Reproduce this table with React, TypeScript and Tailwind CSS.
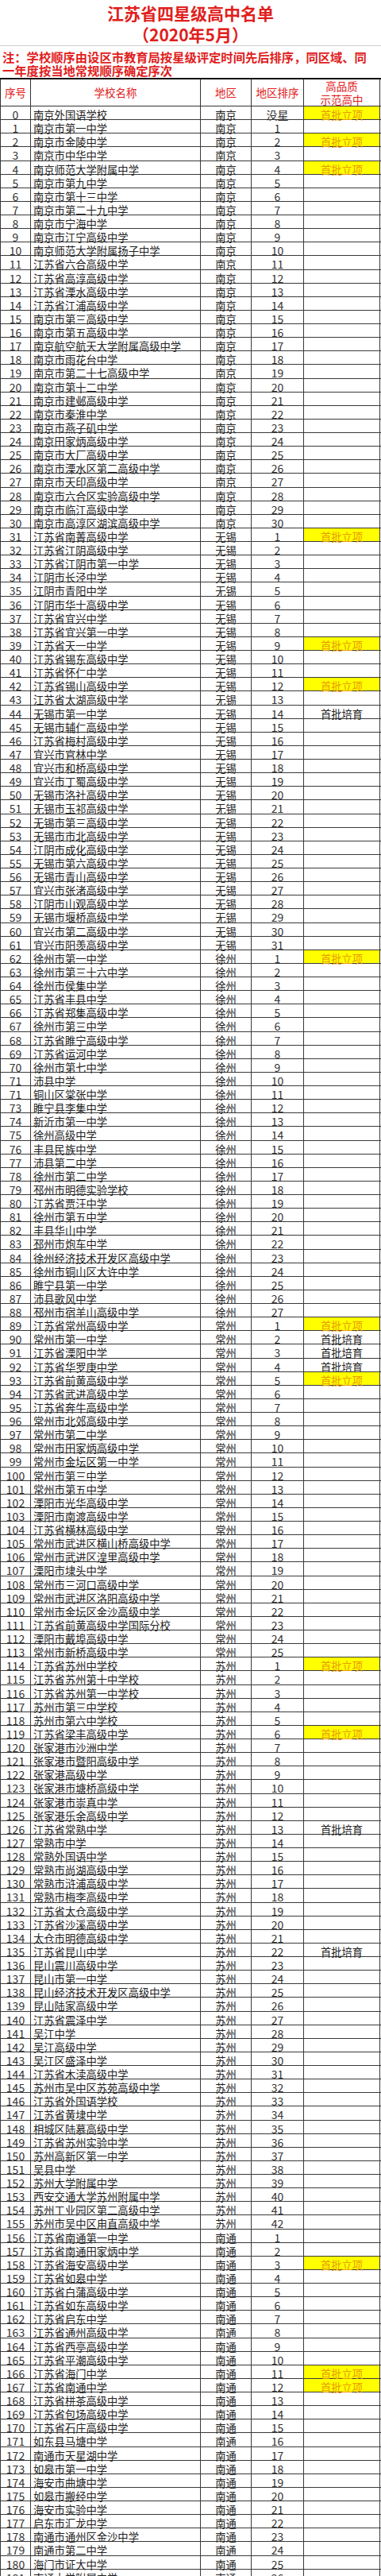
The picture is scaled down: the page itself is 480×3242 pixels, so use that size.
const groups: [string, string[]][] = [
  [
    "南京",
    [
      "南京外国语学校", "南京市第一中学", "南京市金陵中学", "南京市中华中学", "南京师范大学附属中学",
      "南京市第九中学", "南京市第十三中学", "南京市第二十九中学", "南京市宁海中学", "南京市江宁高级中学",
      "南京师范大学附属扬子中学", "江苏省六合高级中学", "江苏省高淳高级中学", "江苏省溧水高级中学", "江苏省江浦高级中学",
      "南京市第三高级中学", "南京市第五高级中学", "南京航空航天大学附属高级中学", "南京市雨花台中学", "南京市第二十七高级中学",
      "南京市第十二中学", "南京市建邺高级中学", "南京市秦淮中学", "南京市燕子矶中学", "南京田家炳高级中学",
      "南京市大厂高级中学", "南京市溧水区第二高级中学", "南京市天印高级中学", "南京市六合区实验高级中学", "南京市临江高级中学",
      "南京市高淳区湖滨高级中学",
    ],
  ],
  [
    "无锡",
    [
      "江苏省南菁高级中学", "江苏省江阴高级中学", "江苏省江阴市第一中学", "江阴市长泾中学", "江阴市青阳中学",
      "江阴市华士高级中学", "江苏省宜兴中学", "江苏省宜兴第一中学", "江苏省天一中学", "江苏省锡东高级中学",
      "江苏省怀仁中学", "江苏省锡山高级中学", "江苏省太湖高级中学", "无锡市第一中学", "无锡市辅仁高级中学",
      "江苏省梅村高级中学", "宜兴市官林中学", "宜兴市和桥高级中学", "宜兴市丁蜀高级中学", "无锡市洛社高级中学",
      "无锡市玉祁高级中学", "无锡市第三高级中学", "无锡市市北高级中学", "江阴市成化高级中学", "无锡市第六高级中学",
      "无锡市青山高级中学", "宜兴市张渚高级中学", "江阴市山观高级中学", "无锡市堰桥高级中学", "宜兴市第二高级中学",
      "宜兴市阳羡高级中学",
    ],
  ],
  [
    "徐州",
    [
      "徐州市第一中学", "徐州市第三十六中学", "徐州市侯集中学", "江苏省丰县中学", "江苏省郑集高级中学",
      "徐州市第三中学", "江苏省睢宁高级中学", "江苏省运河中学", "徐州市第七中学", "沛县中学",
      "铜山区棠张中学", "睢宁县李集中学", "新沂市第一中学", "徐州高级中学", "丰县民族中学",
      "沛县第二中学", "徐州市第二中学", "邳州市明德实验学校", "江苏省贾汪中学", "徐州市第五中学",
      "丰县华山中学", "邳州市炮车中学", "徐州经济技术开发区高级中学", "徐州市铜山区大许中学", "睢宁县第一中学",
      "沛县歌风中学", "邳州市宿羊山高级中学",
    ],
  ],
  [
    "常州",
    [
      "江苏省常州高级中学", "常州市第一中学", "江苏省溧阳中学", "江苏省华罗庚中学", "江苏省前黄高级中学",
      "江苏省武进高级中学", "江苏省奔牛高级中学", "常州市北郊高级中学", "常州市第二中学", "常州市田家炳高级中学",
      "常州市金坛区第一中学", "常州市第三中学", "常州市第五中学", "溧阳市光华高级中学", "溧阳市南渡高级中学",
      "江苏省横林高级中学", "常州市武进区横山桥高级中学", "常州市武进区湟里高级中学", "溧阳市埭头中学", "常州市三河口高级中学",
      "常州市武进区洛阳高级中学", "常州市金坛区金沙高级中学", "江苏省前黄高级中学国际分校", "溧阳市戴埠高级中学", "常州市新桥高级中学",
    ],
  ],
  [
    "苏州",
    [
      "江苏省苏州中学校", "江苏省苏州第十中学校", "江苏省苏州第一中学校", "苏州市第三中学校", "苏州市第六中学校",
      "江苏省梁丰高级中学", "张家港市沙洲中学", "张家港市暨阳高级中学", "张家港高级中学", "张家港市塘桥高级中学",
      "张家港市崇真中学", "张家港乐余高级中学", "江苏省常熟中学", "常熟市中学", "常熟外国语中学",
      "常熟市尚湖高级中学", "常熟市浒浦高级中学", "常熟市梅李高级中学", "江苏省太仓高级中学", "江苏省沙溪高级中学",
      "太仓市明德高级中学", "江苏省昆山中学", "昆山震川高级中学", "昆山市第一中学", "昆山经济技术开发区高级中学",
      "昆山陆家高级中学", "江苏省震泽中学", "吴江中学", "吴江高级中学", "吴江区盛泽中学",
      "江苏省木渎高级中学", "苏州市吴中区苏苑高级中学", "江苏省外国语学校", "江苏省黄埭中学", "相城区陆慕高级中学",
      "江苏省苏州实验中学", "苏州高新区第一中学", "吴县中学", "苏州大学附属中学", "西安交通大学苏州附属中学",
      "苏州工业园区第二高级中学", "苏州市吴中区甪直高级中学",
    ],
  ],
  [
    "南通",
    [
      "江苏省南通第一中学", "江苏省南通田家炳中学", "江苏省海安高级中学", "江苏省如皋中学", "江苏省白蒲高级中学",
      "江苏省如东高级中学", "江苏省启东中学", "江苏省通州高级中学", "江苏省西亭高级中学", "江苏省平潮高级中学",
      "江苏省海门中学", "江苏省南通中学", "江苏省栟茶高级中学", "江苏省包场高级中学", "江苏省石庄高级中学",
      "如东县马塘中学", "南通市天星湖中学", "如皋市第一中学", "海安市曲塘中学", "如皋市搬经中学",
      "海安市实验中学", "启东市汇龙中学", "南通市通州区金沙中学", "南通市第二中学", "海门市证大中学",
      "南通大学附属中学",
    ],
  ],
];

const lixiang = new Set([0, 2, 4, 31, 39, 42, 62, 89, 93, 114, 119, 158, 166, 167]);
const peiyu = new Set([44, 90, 91, 92, 126, 135]);

type Row = { no: string; name: string; region: string; rank: string; tag: "" | "lx" | "py" };

function buildRows(): Row[] {
  const rows: Row[] = [];
  let i = 0;
  for (const [region, names] of groups) {
    let rank = 0;
    for (const name of names) {
      let r: string;
      if (i === 0) {
        r = "没星";
      } else {
        rank++;
        r = String(rank);
      }
      rows.push({
        no: i === 72 ? "71" : String(i),
        name,
        region,
        rank: r,
        tag: lixiang.has(i) ? "lx" : peiyu.has(i) ? "py" : "",
      });
      i++;
    }
  }
  return rows;
}

export default function App() {
  const rows = buildRows();

  return (
    <div className="w-[480px] overflow-hidden bg-white font-['Noto_Sans_CJK_SC',sans-serif] text-[#222]">
      <div className="flex h-[58px] flex-col items-center border-b border-[#cfcfcf] pt-[3px] text-[21px] leading-[27px] font-bold text-[#e0201c]">
        <div>江苏省四星级高中名单</div>
        <div>（2020年5月）</div>
      </div>

      <div className="h-[40px] whitespace-nowrap pl-[3px] pt-[5px] text-[15.3px] leading-[17px] font-bold text-[#e0201c]">
        注：学校顺序由设区市教育局按星级评定时间先后排序，同区域、同
        <br />
        一年度按当地常规顺序确定序次
      </div>

      <div className="border-t-2 border-[#111]">
        <div className="flex h-[34px] border-b border-[#333] text-[13.5px] text-[#e0201c]">
          <div className="flex w-[39px] items-center justify-center border-x border-[#333]">序号</div>
          <div className="flex w-[214px] items-center justify-center border-r border-[#333]">学校名称</div>
          <div className="flex w-[64px] items-center justify-center border-r border-[#333]">地区</div>
          <div className="flex w-[66px] items-center justify-center border-r border-[#333]">地区排序</div>
          <div className="flex w-[96px] flex-col items-center justify-center border-r border-[#333] leading-[17px]">
            <span>高品质</span>
            <span>示范高中</span>
          </div>
        </div>

        {rows.map((row) => (
          <div key={row.no + row.name} className="flex h-[17.14px] border-b border-[#3a3a3a] leading-[13px]">
            <div className="w-[39px] border-x border-[#3a3a3a] pt-[4px] text-center text-[14px] text-[#333]">
              {row.no}
            </div>
            <div className="w-[214px] whitespace-nowrap border-r border-[#3a3a3a] pl-[3px] pt-[4px] text-[13.3px]">
              {row.name}
            </div>
            <div className="w-[64px] border-r border-[#3a3a3a] pt-[4px] text-center text-[13.3px]">{row.region}</div>
            <div className="w-[66px] border-r border-[#3a3a3a] pt-[4px] text-center text-[14px] text-[#333]">
              {row.rank}
            </div>
            {row.tag === "lx" ? (
              <div className="w-[96px] border-r border-[#3a3a3a] bg-[#ffff00] pt-[4px] text-center text-[13.3px] text-[#e89a00]">
                首批立项
              </div>
            ) : (
              <div className="w-[96px] border-r border-[#3a3a3a] pt-[4px] text-center text-[13.3px]">
                {row.tag === "py" ? "首批培育" : ""}
              </div>
            )}
          </div>
        ))}
      </div>
    </div>
  );
}
